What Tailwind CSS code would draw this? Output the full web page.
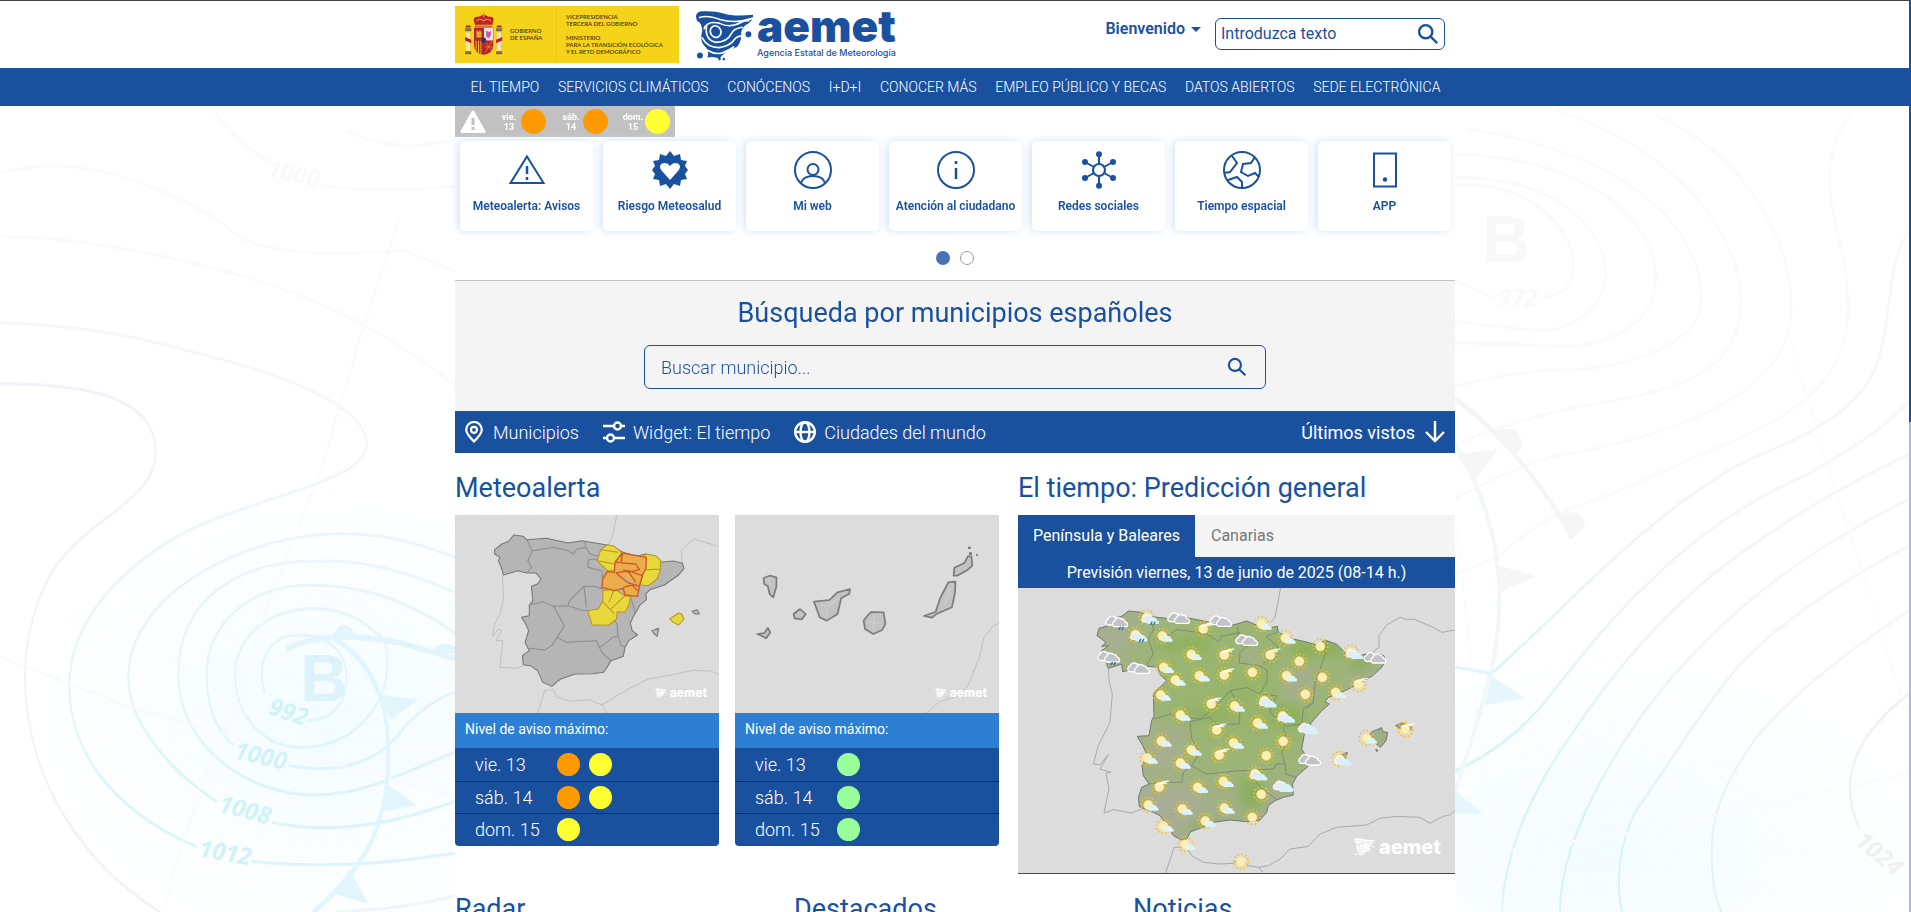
<!DOCTYPE html>
<html lang="es" class="[scrollbar-width:none]">

<head>
    <meta charset="UTF-8">
    <meta name="viewport" content="width=device-width, initial-scale=1.0">
    <title>Agencia Estatal de Meteorología - AEMET</title>
    <script src="https://cdn.jsdelivr.net/npm/@tailwindcss/browser@4"></script>
</head>

<body class="bg-white text-[#1a519f] font-[Roboto,sans-serif] pr-px">

    <!-- Shared symbols -->
    <svg class="absolute w-0 h-0" aria-hidden="true">
        <defs>
            <mask id="contours" maskUnits="userSpaceOnUse" x="755" y="20" width="200" height="170">
                <rect x="755" y="20" width="200" height="170" fill="#fff" />
                <g fill="none" stroke="#000" stroke-width="5" stroke-linecap="round">
                    <path d="M776 50Q800 42 838 56Q885 70 940 52" />
                    <path d="M790 84Q800 58 838 68Q868 84 905 64Q918 58 926 60" />
                    <ellipse cx="825" cy="93" rx="16" ry="18" transform="rotate(-25 825 93)" />
                    <path d="M797 78Q792 118 825 126Q860 126 874 98Q880 84 906 80" />
                    <path d="M784 112Q800 142 836 142Q868 136 880 120Q888 108 904 106" />
                    <path d="M800 150Q822 164 846 158Q866 150 880 140" />
                </g>
            </mask>
            <symbol id="aemetMark" viewBox="762 28 180 154">
                <g fill="currentColor">
                    <path mask="url(#contours)"
                        d="M765 48Q764 30 790 31Q825 30 850 38Q880 48 939 42Q941 56 926 68Q908 76 903 94Q906 120 890 140Q856 150 836 176Q822 168 800 172Q808 150 788 134Q776 118 784 92Q784 66 768 60Z" />
                    <circle cx="777" cy="166" r="9" />
                    <circle cx="925" cy="101" r="9" />
                    <circle cx="837" cy="177" r="4" />
                    <circle cx="850" cy="177" r="4" />
                </g>
            </symbol>
            <symbol id="lupa" viewBox="0 0 24 24">
                <path fill="none" stroke="currentColor" stroke-width="2.6" d="M14.6 14.6L22 22M9.5 2.3a7.2 7.2 0 1 0 0 14.4a7.2 7.2 0 0 0 0-14.4z" />
            </symbol>

            <!-- Weather icons, centred on the sun -->
            <g id="sol">
                <circle r="22" fill="none" stroke="#f2c21a" stroke-width="5" stroke-dasharray="4.5 7.02" />
                <circle r="14" fill="#fdeeb4" stroke="#f9de62" stroke-width="2" />
            </g>
            <path id="nube" d="M-20 13a9 9 0 0 1 1-17a12 12 0 0 1 20-6a10 10 0 0 1 11 9a8 8 0 0 1 5 14z" />
            <g id="pocoNuboso">
                <use href="#sol" />
                <use href="#nube" fill="#dff3fb" transform="translate(17 8) scale(.72)" />
            </g>
            <g id="velos">
                <use href="#sol" />
                <path fill="#fff" fill-opacity=".85" d="M-18-7Q-4-11 4-15Q16-20 32-19Q30-15 18-14Q24-13 24-10Q4-9-18-7z" />
            </g>
            <g id="cubierto">
                <g fill="#c2c2c9" stroke="#fff" stroke-width="4" stroke-linejoin="round">
                    <use href="#nube" transform="translate(-9 -2)" />
                    <use href="#nube" transform="translate(11 3)" />
                </g>
            </g>
            <g id="nubes">
                <use href="#nube" fill="#e9e9ee" stroke="#fff" stroke-width="3" transform="translate(-5 -2)" />
                <use href="#nube" fill="#d8f0fa" transform="translate(11 5)" />
            </g>
            <g id="nuboso">
                <use href="#sol" />
                <use href="#nubes" transform="translate(11 5) scale(.85)" />
            </g>
            <g id="gotas" stroke="#2d6ca8" stroke-width="4" stroke-linecap="round">
                <path d="M3 15l-4 7M12 15l-4 7" />
            </g>
            <g id="lluvia">
                <use href="#cubierto" />
                <use href="#gotas" transform="translate(6 2)" />
            </g>
            <g id="solLluvia">
                <use href="#nuboso" />
                <use href="#gotas" transform="translate(13 -1)" />
            </g>
        </defs>
    </svg>

    <!-- Isobar background -->
    <svg class="fixed left-0 top-0 -z-10" width="1911" height="912" fill="none" aria-hidden="true">
        <defs>
            <radialGradient id="glow">
                <stop offset="0" stop-color="#f3fcff" />
                <stop offset="1" stop-color="#f3fcff" stop-opacity="0" />
            </radialGradient>
            <linearGradient id="isoL" x1="0" y1="200" x2="0" y2="1300" gradientUnits="userSpaceOnUse">
                <stop offset="0" stop-color="#f9f9fa" />
                <stop offset=".4" stop-color="#f4f6fc" />
                <stop offset="1" stop-color="#def4fb" />
            </linearGradient>
            <linearGradient id="isoR" x1="900" y1="700" x2="400" y2="1400" gradientUnits="userSpaceOnUse">
                <stop offset="0" stop-color="#f6f6f6" />
                <stop offset=".5" stop-color="#eff4f9" />
                <stop offset="1" stop-color="#d9f3fa" />
            </linearGradient>
        </defs>
        <ellipse cx="330" cy="720" rx="300" ry="230" fill="url(#glow)" />
        <ellipse cx="1600" cy="850" rx="330" ry="200" fill="url(#glow)" />
        <g transform="translate(0 100) scale(.3333 .5179)" stroke="url(#isoL)" stroke-width="6">
            <path stroke="#fafafa" d="M0 140Q200 110 400 155T700 255T1210 290L1400 340M0 263Q300 265 700 335T1400 570M640 20Q720 90 810 120M960 165Q1150 180 1400 165M1040 60Q1200 110 1400 70" />
            <path d="M0 430C300 435 480 470 600 490C850 530 1100 590 1100 665C1100 745 700 770 500 855C330 925 205 1020 208 1135C212 1290 400 1390 590 1442M755 1470Q1050 1490 1400 1450" />
            <path stroke="#f1f3fa" d="M0 548C250 548 467 570 467 680C467 790 200 810 120 960C90 1010 75 1060 75 1110C75 1320 260 1480 480 1568" />
            <path d="M1400 892C1200 840 1100 835 980 838C700 850 385 960 385 1115C385 1200 500 1290 650 1355M815 1395Q1080 1430 1400 1345" />
            <path d="M1400 960C1150 890 1050 890 950 890C720 890 535 960 535 1110C535 1250 750 1342 940 1342C1100 1342 1200 1300 1400 1250" />
            <path d="M1400 1045C1200 950 1050 937 930 937C750 937 620 1010 620 1110C620 1170 650 1220 700 1245M865 1285Q1080 1310 1190 1230Q1270 1160 1400 1135" />
            <path d="M945 982C800 982 705 1040 705 1110C705 1190 790 1250 905 1250C1060 1250 1162 1170 1162 1090C1162 1050 1155 1035 1130 1030C1080 1000 1020 982 945 982zM795 1145C770 1100 790 1033 900 1033C990 1033 1040 1070 1040 1115C1040 1170 990 1198 920 1198" />
            <path stroke="#f8f9fc" stroke-width="4" d="M1200 230L1080 460L960 720L800 980L700 1180L600 1330L490 1560M0 1075L380 1170L700 1230L1400 1350" />
            <g stroke="#e2f4fc" stroke-width="11">
                <path d="M860 1060Q980 1020 1200 1048L1400 1085M1000 1040C1120 1080 1165 1170 1165 1260C1165 1400 1100 1480 940 1568" />
                <path fill="#e2f4fc" stroke="none" d="M995 1040Q1030 985 1075 1042zM1300 1062Q1340 1032 1400 1075zM1140 1148L1255 1158L1170 1196zM1160 1320L1250 1362L1140 1374zM1050 1485L1105 1552L1000 1532z" />
            </g>
            <path stroke="#f1f5fb" d="M1010 1568Q1250 1560 1400 1530" />
        </g>
        <g transform="translate(1450 100) scale(.3333 .5179)" stroke-width="6">
            <g stroke="#fafafa">
                <path d="M0 165C200 150 370 230 370 325C370 365 330 375 275 383M0 345L130 382M0 150C300 145 467 240 467 335C467 400 370 445 270 445C180 442 80 432 0 425M0 105C400 105 618 230 618 345C618 430 480 476 330 476C200 470 100 470 0 470" />
                <path d="M50 55C500 100 755 230 755 390C755 470 520 521 350 521C200 522 100 540 0 555M320 20C700 100 873 270 873 385C873 510 740 560 400 590C250 610 100 640 0 670M620 30C900 110 1025 280 1025 400C1025 520 850 630 300 690Q150 720 0 775" />
                <path d="M1200 30C1140 80 1130 140 1145 200C1170 290 1195 330 1195 400C1195 560 1000 620 750 685C600 730 450 770 380 785Q240 820 150 880L0 920" />
            </g>
            <g stroke="url(#isoR)">
                <path d="M1380 250C1310 310 1330 400 1290 490C1240 620 1000 660 850 710C560 820 350 980 120 1110" />
                <path d="M1380 580Q1300 640 1080 720Q800 800 600 930Q480 1000 300 1150Q180 1250 0 1300" />
                <path d="M1380 683Q1100 770 930 850Q620 980 370 1220Q170 1400 155 1568" />
                <path d="M1380 770Q1000 890 760 1050Q540 1190 410 1370Q330 1480 330 1568" />
                <path d="M1380 860Q1050 970 870 1090C740 1190 650 1290 560 1370C500 1440 500 1520 515 1568" />
                <path d="M1380 985Q1080 1110 920 1230C820 1320 785 1380 785 1450Q785 1530 815 1568" />
            </g>
            <path stroke="#f1f1f1" d="M1380 1145C1250 1210 1200 1270 1200 1330Q1200 1370 1230 1408" />
            <path stroke="#f9fbfc" stroke-width="4" d="M1020 460L1120 680L1200 840L1380 1200M20 830L80 1180L155 1568M0 1465L600 1410L1380 1300" />
            <path stroke="#f5f5f5" stroke-width="10" d="M0 570Q200 660 370 845" />
            <path stroke="#f2f7fa" stroke-width="12" d="M0 650Q200 850 130 1080Q90 1200 0 1360" />
            <path fill="#f6f6f6" d="M135 640Q220 620 215 675L190 685zM325 800Q400 785 405 825L360 850zM20 685L145 675L70 735zM150 900L260 920L150 950z" />
            <path fill="#e6f6fd" d="M125 1112L225 1155L105 1168zM0 1325L100 1378L0 1378z" />
            <path stroke="#e3f4fc" d="M0 1093L130 1108" />
        </g>
        <g class="font-['Open_Sans',sans-serif] font-bold italic" text-anchor="middle">
            <g fill="#d2f2f9" font-size="24">
                <text transform="translate(286 720) rotate(18)">992</text>
                <text transform="translate(259 764) rotate(13)">1000</text>
                <text transform="translate(243 818) rotate(15)">1008</text>
                <text transform="translate(224 861) rotate(10)">1012</text>
            </g>
            <g fill="#f9f9f9" font-size="24">
                <text transform="translate(292 182) rotate(12)">1000</text>
                <text x="1518" y="306">972</text>
                <text fill="#f0f0f0" transform="translate(1874 860) rotate(40)">1024</text>
            </g>
        </g>
        <g class="font-['Liberation_Sans',sans-serif] font-bold" text-anchor="middle" font-size="66">
            <text x="324" y="701" fill="#dcf3fc">B</text>
            <text x="1506" y="262" fill="#f8f8f8">B</text>
        </g>
    </svg>

    <!-- Header -->
    <header class="bg-white border-t border-[#444] h-17">
        <div class="max-w-[1000px] mx-auto flex items-start">
            <a href="#" class="mt-[5px] w-56 h-[57px] bg-[#f6d31b] flex text-[#4a3a10] font-[Lato,sans-serif] font-semibold text-[6px] leading-[7px]">
                <svg class="ml-2 mt-[5px]" width="42" height="46" viewBox="40 36 122 128" preserveAspectRatio="none" aria-label="Escudo de España">
                    <path d="M73 68Q66 50 86 52Q100 42 115 52Q134 50 127 68L124 80H76z" fill="#c0202c" />
                    <path d="M78 64Q90 54 100 64Q110 54 122 64M100 40v14M95 45h10" fill="none" stroke="#d8a21c" stroke-width="3" />
                    <path d="M76 74h48v5H76z" fill="#d8a21c" />
                    <path d="M50 96h10v50H50zM140 96h10v50h-10z" fill="#e8e4e0" />
                    <path d="M46 84h18v8H46zM136 84h18v8h-18zM46 148h18v8H46zM136 148h18v8h-18z" fill="#7b6f4a" />
                    <path d="M46 108l18 8v10l-18-8zM154 108l-18 8v10l18-8zM48 76h14v6H48zM138 76h14v6h-14z" fill="#c0202c" />
                    <path d="M72 82h56v48q0 24-28 28q-28-4-28-28z" fill="#b8242e" />
                    <path d="M101 83h26v35h-26z" fill="#efdfe6" />
                    <path d="M107 90l8 5l6-5v12l-5 10l-8-4z" fill="#b8609a" />
                    <path d="M79 96v-6h4v4h4v-4h4v4h3v16H79z" fill="#e0a92a" />
                    <path d="M78 119v30M85 119v34M92 119v37" stroke="#e6b422" stroke-width="3" />
                    <path d="M103 120l22 28M125 120l-21 32M104 136h22" stroke="#d8962a" stroke-width="2" />
                    <ellipse cx="100" cy="118" rx="7" ry="8" fill="#203a80" stroke="#c0202c" stroke-width="2" />
                </svg>
                <span class="ml-[5px] mt-[21px] w-[46px]">GOBIERNO<br>DE ESPAÑA</span>
                <span class="border-l border-[#e9c617] pl-[9px] pt-[7px] whitespace-nowrap">VICEPRESIDENCIA<br>TERCERA DEL GOBIERNO<br><br>MINISTERIO<br>PARA LA TRANSICIÓN ECOLÓGICA<br>Y EL RETO DEMOGRÁFICO</span>
            </a>
            <a href="#" class="flex ml-4 mt-[9px]" aria-label="aemet">
                <svg width="59" height="51">
                    <use href="#aemetMark" />
                </svg>
                <span class="ml-[3px] font-[Inter,sans-serif]">
                    <span class="block font-black text-[44px] leading-8">aemet</span>
                    <span class="block font-medium text-[9px] leading-3 mt-[5px]">Agencia Estatal de Meteorología</span>
                </span>
            </a>
            <div class="ml-auto mr-[10px] flex items-start">
                <button type="button" class="mt-[18px] mr-[14px] flex items-center gap-[6px] text-base leading-5 font-semibold">
                    Bienvenido
                    <span class="border-x-[5px] border-x-transparent border-t-[5px] border-t-[#1a519f]"></span>
                </button>
                <form class="mt-[17px] w-[230px] h-8 px-[5px] flex items-center border border-[#1a519f] rounded-md bg-white">
                    <input type="text" aria-label="Introduzca texto" placeholder="Introduzca texto"
                        class="flex-1 min-w-0 text-base outline-none placeholder:text-[#1a519f]">
                    <button type="submit" aria-label="Buscar"><svg width="22" height="22">
                            <use href="#lupa" />
                        </svg></button>
                </form>
            </div>
        </div>
    </header>

    <!-- Main navigation -->
    <nav class="bg-[#1a519f] -mr-px">
        <ul class="max-w-[1000px] mx-auto px-[15px] h-[38px] flex items-center justify-between text-white text-[14px] font-light whitespace-nowrap">
            <li><a href="#">EL TIEMPO</a></li>
            <li><a href="#">SERVICIOS CLIMÁTICOS</a></li>
            <li><a href="#">CONÓCENOS</a></li>
            <li><a href="#">I+D+I</a></li>
            <li><a href="#">CONOCER MÁS</a></li>
            <li><a href="#">EMPLEO PÚBLICO Y BECAS</a></li>
            <li><a href="#">DATOS ABIERTOS</a></li>
            <li><a href="#">SEDE ELECTRÓNICA</a></li>
        </ul>
    </nav>

    <main class="max-w-[1000px] mx-auto bg-white pb-8">

        <!-- Warning strip -->
        <a href="#" class="w-55 h-[31px] pl-[5px] bg-[#c1c1c1] flex items-center text-white font-bold text-[9px] leading-[10px] text-center">
            <svg width="26" height="24" viewBox="0 0 26 24" class="mr-3" aria-hidden="true">
                <path d="M13 2L24 21.500H2z" fill="#fff" stroke="#fff" stroke-width="3" stroke-linejoin="round" />
                <path d="M13 8v7M13 17v3" stroke="#c1c1c1" stroke-width="3" />
            </svg>
            <span class="w-[22px]">vie.<br>13</span><i class="size-[25px] rounded-full bg-[#ff9900] ml-px mr-[14px]"></i>
            <span class="w-[22px]">sáb.<br>14</span><i class="size-[25px] rounded-full bg-[#ff9900] ml-px mr-[14px]"></i>
            <span class="w-[22px]">dom.<br>15</span><i class="size-[25px] rounded-full bg-[#ffff33] ml-px"></i>
        </a>

        <!-- Quick links -->
        <div class="grid grid-cols-7 gap-[10px] pl-[5px] pr-1 pt-1 text-[12px] font-semibold text-center whitespace-nowrap">
            <a href="#" class="h-[90px] pt-[10px] flex flex-col items-center bg-white rounded-[5px] shadow-[-2px_0_8px_#cfe2f6]">
                <svg width="38" height="38" viewBox="0 0 38 38" fill="none" stroke="currentColor" stroke-width="2">
                    <path d="M19 5.500L35.500 32H2.500z" /><path d="M19 15v8M19 26v3" stroke-width="2.500" />
                </svg>
                <span class="mt-2">Meteoalerta: Avisos</span>
            </a>
            <a href="#" class="h-[90px] pt-[10px] flex flex-col items-center bg-white rounded-[5px] shadow-[-2px_0_8px_#cfe2f6]">
                <svg width="38" height="38" viewBox="0 0 38 38">
                    <path fill="currentColor" d="M19 0l4 5l6-2l1 6l6 1l-2 5l3 4l-3 4l2 5l-6 1l-1 6l-6-2l-4 5l-4-5l-6 2l-1-6l-6-1l2-5l-3-4l3-4l-2-5l6-1l1-6l6 2z" />
                    <path fill="#fff" d="M19 29L11 20Q7 15 11 12.500Q16 10.500 19 15Q22 10.500 27 12.500Q31 15 27 20z" />
                </svg>
                <span class="mt-2">Riesgo Meteosalud</span>
            </a>
            <a href="#" class="h-[90px] pt-[10px] flex flex-col items-center bg-white rounded-[5px] shadow-[-2px_0_8px_#cfe2f6]">
                <svg width="38" height="38" viewBox="0 0 38 38" fill="none" stroke="currentColor" stroke-width="2">
                    <circle cx="19" cy="19" r="18" /><circle cx="19" cy="18.500" r="5.500" /><path d="M7 32Q9 25 19 25T31 32" />
                </svg>
                <span class="mt-2">Mi web</span>
            </a>
            <a href="#" class="h-[90px] pt-[10px] flex flex-col items-center bg-white rounded-[5px] shadow-[-2px_0_8px_#cfe2f6]">
                <svg width="38" height="38" viewBox="0 0 38 38" fill="none" stroke="currentColor" stroke-width="2">
                    <circle cx="19" cy="19" r="18" /><path d="M19 17v11M19 10v3" stroke-width="2.500" />
                </svg>
                <span class="mt-2">Atención al ciudadano</span>
            </a>
            <a href="#" class="h-[90px] pt-[10px] flex flex-col items-center bg-white rounded-[5px] shadow-[-2px_0_8px_#cfe2f6]">
                <svg width="38" height="38" viewBox="0 0 38 38" fill="currentColor">
                    <circle cx="19" cy="19" r="6" fill="none" stroke="currentColor" stroke-width="2.200" />
                    <path stroke="currentColor" stroke-width="2" d="M19 3v10M19 25v10M5 11l9 5M33 11l-9 5M5 27l9-5M33 27l-9-5" />
                    <circle cx="19" cy="3.200" r="3" /><circle cx="19" cy="34.800" r="3" /><circle cx="5" cy="11" r="3" /><circle cx="33" cy="11" r="3" /><circle cx="5" cy="27" r="3" /><circle cx="33" cy="27" r="3" />
                </svg>
                <span class="mt-2">Redes sociales</span>
            </a>
            <a href="#" class="h-[90px] pt-[10px] flex flex-col items-center bg-white rounded-[5px] shadow-[-2px_0_8px_#cfe2f6]">
                <svg width="38" height="38" viewBox="0 0 38 38" fill="none" stroke="currentColor" stroke-width="2">
                    <circle cx="19" cy="19" r="18" />
                    <path d="M9 5l5 7l-7 9l-6 1M32 6l-4 6l-8 1l-2 8l7 4l7-3l4 4M5 29l9-3l5 5v6" />
                </svg>
                <span class="mt-2">Tiempo espacial</span>
            </a>
            <a href="#" class="h-[90px] pt-[10px] flex flex-col items-center bg-white rounded-[5px] shadow-[-2px_0_8px_#cfe2f6]">
                <svg width="38" height="38" viewBox="0 0 38 38" fill="none" stroke="currentColor" stroke-width="2">
                    <path d="M8 2.500h22v33H8z" /><circle cx="19" cy="28.500" r="2.200" fill="currentColor" stroke="none" />
                </svg>
                <span class="mt-2">APP</span>
            </a>
        </div>
        <div class="flex justify-center gap-[10px] mt-5 mb-[15px]">
            <button type="button" aria-label="Página 1" class="size-[14px] rounded-full bg-[#4774b8]"></button>
            <button type="button" aria-label="Página 2" class="size-[14px] rounded-full border border-[#999]"></button>
        </div>

        <!-- Town search -->
        <section class="h-[131px] border-t border-[#bfc3c7] bg-[#f4f4f4] pt-4">
            <h2 class="text-[27px] leading-8 text-center">Búsqueda por municipios españoles</h2>
            <form class="mt-4 mx-auto w-[622px] h-11 pl-4 pr-[18px] flex items-center border border-[#1a519f] rounded-md">
                <input type="text" aria-label="Buscar municipio" placeholder="Buscar municipio..."
                    class="flex-1 text-[18px] font-light outline-none placeholder:text-[#1a519f]">
                <button type="submit" aria-label="Buscar"><svg width="20" height="20">
                        <use href="#lupa" />
                    </svg></button>
            </form>
        </section>
        <div class="h-[42px] px-[10px] bg-[#1a519f] text-white text-[18px] font-light flex items-center">
            <a href="#" class="flex items-center gap-[10px]">
                <svg width="18" height="22" viewBox="0 0 18 22" fill="none" stroke="currentColor" stroke-width="2.200">
                    <path d="M9 20.500Q1.200 13 1.200 8.800a7.800 7.800 0 0 1 15.600 0Q16.800 13 9 20.500z" /><circle cx="9" cy="8.800" r="3" />
                </svg>Municipios</a>
            <a href="#" class="flex items-center gap-2 ml-6">
                <svg width="22" height="22" viewBox="0 0 22 22" fill="none" stroke="currentColor" stroke-width="2.400">
                    <path d="M0 5h11M18 5h4M0 17h4M11 17h11" /><circle cx="14.500" cy="5" r="3.500" /><circle cx="7.500" cy="17" r="3.500" />
                </svg>Widget: El tiempo</a>
            <a href="#" class="flex items-center gap-2 ml-6">
                <svg width="22" height="22" viewBox="0 0 22 22" fill="none" stroke="currentColor" stroke-width="2.400">
                    <circle cx="11" cy="11" r="9.800" /><ellipse cx="11" cy="11" rx="4.500" ry="9.800" /><path d="M1 11h20" />
                </svg>Ciudades del mundo</a>
            <button type="button" class="ml-auto flex items-center gap-[10px] font-normal">Últimos vistos
                <svg width="20" height="22" viewBox="0 0 20 22" fill="none" stroke="currentColor" stroke-width="2.400">
                    <path d="M10 0v20M1 11l9 9l9-9" />
                </svg></button>
        </div>

        <div class="grid grid-cols-[544fr_437fr] gap-x-[19px] pt-[17px]">
            <!-- Warnings -->
            <section>
                <h2 class="text-[27px] leading-9">Meteoalerta</h2>
                <div class="mt-[9px] grid grid-cols-2 gap-4">
                    <div>
                        <a href="#" class="relative block">
                            <svg class="block w-full h-[198px] bg-[#dcdcdc]" viewBox="14 48 739 594" preserveAspectRatio="none" stroke-linejoin="round" aria-label="Mapa de avisos de la península">
                                <g fill="none" stroke="#b2b2b2" stroke-width="2">
                                    <path d="M147 228L150 300L140 345L124 378L120 412L135 390L145 395L128 425L148 425L140 505L185 508L205 500" />
                                    <path d="M467 48L455 110L443 138M650 190L648 155L682 120L720 132L753 143M246 642L265 575L288 572L300 595L335 607L390 602L425 618L440 642M425 618L470 588L500 570L555 540L620 528L680 514L730 516L753 527" />
                                </g>
                                <path fill="#b5b5b5" stroke="#777" stroke-width="3" d="M125 152L145 135L165 127L178 108L205 112L215 122L270 118L330 132L370 125L440 138L460 145L485 160L520 172L548 165L575 172L590 190L625 186L650 192L655 208L640 228L600 258L560 272L548 285L550 302L532 318L512 355L505 372L510 395L525 408L500 425L490 445L485 472L465 480L450 485L440 505L430 520L400 524L350 525L310 540L300 548L285 562L260 550L245 515L225 500L205 497L203 470L222 455L210 430L220 395L212 375L200 355L222 350L222 318L232 305L228 262L245 255L255 240L240 222L215 222L190 215L150 228L142 200L135 185L140 175L125 165z" />
                                <path fill="#bbb" stroke="#777" stroke-width="3" d="M565 395L584 388L580 412L572 405zM678 337L692 332L698 345L685 345z" />
                                <path fill="none" stroke="#8c8c8c" stroke-width="3" d="M215 122L230 155L218 185L228 205L215 222M230 155L290 145L330 155L345 165L355 150L380 145L378 128M380 145L392 165L415 172M415 180L388 182L385 205L425 215M425 215L428 270L405 262L375 262L335 305L330 320M222 318L260 308L290 322L330 320L375 335L385 332M290 322L320 380L300 415L325 430L410 425L418 445L430 438L455 415L470 412L468 375L460 365M300 415L285 440L265 453L222 448M410 425L425 460L450 485M375 262L382 325M505 292L520 345M470 412L480 440L490 445" />
                                <path fill="#e8d83c" stroke="#b5952a" stroke-width="3" d="M440 137L460 142L482 162L465 185L460 215L440 215L412 185L422 152zM545 165L575 170L590 185L588 215L580 240L555 260L532 258L540 225L548 210zM428 275L460 270L490 290L505 292L502 315L490 340L468 338L466 360L445 378L398 378L385 335L415 330L428 305zM615 360L640 342L648 345L655 360L640 378L625 370zM422 152L470 160M415 185L460 195M425 305L460 345M460 270L445 310M490 290L450 330M588 210L548 212" />
                                <path fill="#eaad4c" stroke="#d05a24" stroke-width="4" d="M482 162L550 175L548 210L540 225L530 262L525 292L490 288L485 268L460 275L425 265L428 238L440 218L460 220L462 190zM482 162L480 190L462 190M480 192L520 195L530 212L500 220L485 212M465 222L500 215L538 230M465 222L485 240L500 252L532 262M500 218L520 250M485 265L510 258L525 275" />
                            </svg>
                            <span class="absolute right-3 bottom-3 flex items-center gap-[3px] text-white font-[Inter,sans-serif] font-extrabold text-[12px] leading-4">
                                <svg width="12" height="10"><use href="#aemetMark" /></svg>aemet</span>
                        </a>
                        <table class="w-full bg-[#1a519f] text-white text-left text-[18px] rounded-b overflow-hidden">
                            <caption class="h-[35px] px-[10px] bg-[#2d7fd4] text-left text-[14px] leading-8">Nivel de aviso máximo:</caption>
                            <tr class="h-[33px] border-b border-[#0e2f60]">
                                <th class="w-[102px] pl-5 font-light">vie. 13</th>
                                <td><span class="flex gap-[9px]"><i class="size-[23px] rounded-full bg-[#ff9900]"></i><i class="size-[23px] rounded-full bg-[#ffff33]"></i></span></td>
                            </tr>
                            <tr class="h-8 border-b border-[#0e2f60]">
                                <th class="pl-5 font-light">sáb. 14</th>
                                <td><span class="flex gap-[9px]"><i class="size-[23px] rounded-full bg-[#ff9900]"></i><i class="size-[23px] rounded-full bg-[#ffff33]"></i></span></td>
                            </tr>
                            <tr class="h-[33px]">
                                <th class="pl-5 font-light">dom. 15</th>
                                <td><span class="flex"><i class="size-[23px] rounded-full bg-[#ffff33]"></i></span></td>
                            </tr>
                        </table>
                    </div>
                    <div>
                        <a href="#" class="relative block">
                            <svg class="block w-full h-[198px] bg-[#dcdcdc]" viewBox="798 48 739 594" preserveAspectRatio="none" stroke-linejoin="round" aria-label="Mapa de avisos de Canarias">
                                <path fill="none" stroke="#b2b2b2" stroke-width="2" d="M1537 373L1522 380L1495 415L1482 475L1450 560L1425 590L1370 608L1335 642" />
                                <g fill="#c3c3c3" stroke="#7d7d7d" stroke-width="5">
                                    <path d="M878 237L895 230L914 235L914 262L905 295L895 285L890 262L880 255zM962 345L980 330L996 345L985 361L965 358zM860 405L880 402L890 387L897 400L885 418L875 412z" />
                                    <path d="M1019 308L1062 303L1085 280L1120 270L1118 284L1095 298L1085 345L1055 365L1035 355L1024 322zM1172 346L1180 339L1214 340L1219 375L1210 393L1185 405L1162 390L1158 365z" />
                                    <path d="M1395 250L1415 248L1414 280L1405 325L1362 345L1350 356L1327 351L1360 338L1372 298zM1410 230L1412 206L1440 192L1450 172L1460 172L1462 200L1450 212L1420 230z" />
                                </g>
                                <path fill="none" stroke="#cfcfcf" stroke-width="3" d="M1035 320L1060 320L1090 295M1055 330L1055 350M1172 370L1205 372M1188 350L1186 390M1400 265L1385 320M890 240L900 260" />
                                <path fill="#777" d="M1450 143h8v7h-8zM1453 160h8v8h-8zM1473 165h5v5h-5z" />
                            </svg>
                            <span class="absolute right-3 bottom-3 flex items-center gap-[3px] text-white font-[Inter,sans-serif] font-extrabold text-[12px] leading-4">
                                <svg width="12" height="10"><use href="#aemetMark" /></svg>aemet</span>
                        </a>
                        <table class="w-full bg-[#1a519f] text-white text-left text-[18px] rounded-b overflow-hidden">
                            <caption class="h-[35px] px-[10px] bg-[#2d7fd4] text-left text-[14px] leading-8">Nivel de aviso máximo:</caption>
                            <tr class="h-[33px] border-b border-[#0e2f60]">
                                <th class="w-[102px] pl-5 font-light">vie. 13</th>
                                <td><span class="flex"><i class="size-[23px] rounded-full bg-[#99ff99]"></i></span></td>
                            </tr>
                            <tr class="h-8 border-b border-[#0e2f60]">
                                <th class="pl-5 font-light">sáb. 14</th>
                                <td><span class="flex"><i class="size-[23px] rounded-full bg-[#99ff99]"></i></span></td>
                            </tr>
                            <tr class="h-[33px]">
                                <th class="pl-5 font-light">dom. 15</th>
                                <td><span class="flex"><i class="size-[23px] rounded-full bg-[#99ff99]"></i></span></td>
                            </tr>
                        </table>
                    </div>
                </div>
            </section>

            <!-- General forecast -->
            <section>
                <h2 class="text-[27px] leading-9">El tiempo: Predicción general</h2>
                <div class="mt-[9px] h-[42px] flex bg-[#f4f4f4] text-base">
                    <button type="button" class="w-[177px] bg-[#1a519f] text-white whitespace-nowrap">Península y Baleares</button>
                    <button type="button" class="px-4 text-[#777]">Canarias</button>
                </div>
                <p class="bg-[#1a519f] text-white text-base leading-[31px] text-center">Previsión viernes, 13 de junio de 2025 (08-14 h.)</p>
                <a href="#" class="relative block border-b border-[#1a519f]">
                    <svg class="block w-full h-[285px] bg-[#dcdcdc]" viewBox="54 147 1311 855" preserveAspectRatio="none" stroke-linejoin="round" aria-label="Mapa de predicción">
                        <defs>
                            <radialGradient id="land" cx=".5" cy=".35" r=".6">
                                <stop offset="0" stop-color="#96b568" />
                                <stop offset=".6" stop-color="#9db479" />
                                <stop offset="1" stop-color="#a6ae92" />
                            </radialGradient>
                            <filter id="soft">
                                <feGaussianBlur stdDeviation="18" />
                            </filter>
                            <clipPath id="coast">
                                <path id="spain" d="M291 290L297 268L320 262L330 240L365 232L385 216L425 220L445 232L500 238L560 236L620 248L665 255L700 258L740 246L770 258L800 268L832 262L835 280L880 300L915 308L950 318L975 303L1010 316L1040 345L1080 350L1110 342L1152 350L1154 370L1145 385L1118 410L1070 438L1020 462L985 475L975 488L988 495L965 515L935 550L912 590L905 630L920 655L940 668L915 690L890 712L878 735L880 768L850 775L825 785L805 800L800 820L780 843L740 848L690 843L640 850L600 868L572 878L560 900L545 903L520 890L505 862L480 830L460 820L418 803L415 775L425 745L447 735L430 710L426 680L442 650L428 620L412 592L447 590L455 545L462 530L460 465L500 425L478 405L475 385L430 380L395 392L368 398L365 375L325 388L318 370L312 350L305 335L325 320L305 322L318 310z" />
                            </clipPath>
                        </defs>
                        <g fill="none" stroke="#a9a9a9" stroke-width="3">
                            <path d="M325 388L328 430L337 465L330 550L295 620L280 675L300 677L325 647L300 690L333 700L318 702L327 750L312 822L340 812L395 822L430 808" />
                            <path d="M842 147L825 235L812 250M1115 342L1137 325L1137 290L1160 258L1200 235L1220 242L1240 240L1300 265L1325 280L1365 273M497 1002L522 925L560 925L575 950L610 970L660 975L700 973L722 958L745 980L775 985L790 1000M775 985L805 980L840 960L870 930L925 922L960 885L1010 865L1100 858L1140 838L1190 832L1260 835L1290 853L1330 832L1350 828L1365 815" />
                        </g>
                        <use href="#spain" fill="url(#land)" />
                        <g clip-path="url(#coast)">
                            <g filter="url(#soft)">
                                <path fill="#7fae45" d="M470 300h160v30H470zM880 310h150v40H880zM1050 350h60v50h-60zM720 720h70v90h-70zM560 850h200v25H560zM540 520h150v20H540zM820 500h80v60h-80z" opacity=".6" />
                                <path fill="#acab9d" d="M300 270h90v60h-90zM840 380h110v110H840zM440 560h120v130H440zM440 740h160v90H440zM800 760h60v60h-60zM720 330h70v50h-70zM1040 400h70v40h-70z" opacity=".6" />
                            </g>
                        </g>
                        <use href="#spain" fill="none" stroke="#707870" stroke-width="3" />
                        <path fill="#a0ae84" stroke="#707870" stroke-width="3" d="M1100 602L1112 580L1145 566L1148 578L1163 580L1158 605L1142 625L1125 612zM1187 560L1205 552L1235 562L1232 574L1200 568zM1018 650L1042 640L1035 665L1020 668zM1127 632l6 0l-2 6z" />
                        <path fill="none" stroke="#7d8c72" stroke-width="3" d="M445 232L462 270L445 300L460 345L440 378M460 302L500 292L530 272L580 278L630 290L655 308L665 292L720 280M712 262L715 290L745 318L720 340L718 372L780 380L802 395L800 430L780 465M830 280L798 292L832 322L835 350L790 372M980 308L975 350L945 430L940 490L920 510M462 540L510 525L560 535L600 540L650 500L690 455L740 446L780 465L830 470L808 520L860 562L905 555L910 510L940 490M690 455L720 500L718 555L650 556L630 535L570 548L575 600L600 640L575 680L620 705L720 695L820 690L830 675L855 675L845 640L862 610L850 562M447 735L490 730L545 730L550 700L575 680M752 700L780 745L830 782M855 675L858 705L890 715" />

                        <use href="#lluvia" x="352" y="247" /><use href="#lluvia" x="328" y="353" />
                        <use href="#solLluvia" x="440" y="235" /><use href="#solLluvia" x="406" y="287" />
                        <use href="#cubierto" x="538" y="237" /><use href="#cubierto" x="664" y="246" /><use href="#cubierto" x="742" y="303" />
                        <use href="#cubierto" x="418" y="387" /><use href="#cubierto" x="1127" y="356" /><use href="#cubierto" x="931" y="662" />
                        <use href="#pocoNuboso" x="487" y="291" /><use href="#pocoNuboso" x="784" y="255" /><use href="#pocoNuboso" x="856" y="297" />
                        <use href="#pocoNuboso" x="574" y="346" /><use href="#pocoNuboso" x="491" y="385" /><use href="#pocoNuboso" x="526" y="423" />
                        <use href="#pocoNuboso" x="598" y="410" /><use href="#pocoNuboso" x="482" y="468" /><use href="#pocoNuboso" x="860" y="410" />
                        <use href="#pocoNuboso" x="1007" y="460" /><use href="#pocoNuboso" x="704" y="501" /><use href="#pocoNuboso" x="541" y="528" />
                        <use href="#pocoNuboso" x="773" y="552" /><use href="#pocoNuboso" x="484" y="606" /><use href="#pocoNuboso" x="574" y="633" />
                        <use href="#pocoNuboso" x="442" y="657" /><use href="#pocoNuboso" x="541" y="672" /><use href="#pocoNuboso" x="701" y="612" />
                        <use href="#pocoNuboso" x="670" y="727" /><use href="#pocoNuboso" x="593" y="745" /><use href="#pocoNuboso" x="445" y="798" />
                        <use href="#pocoNuboso" x="547" y="810" /><use href="#pocoNuboso" x="673" y="807" /><use href="#pocoNuboso" x="490" y="861" />
                        <use href="#pocoNuboso" x="616" y="846" /><use href="#pocoNuboso" x="556" y="916" /><use href="#pocoNuboso" x="1100" y="597" />
                        <use href="#velos" x="610" y="270" /><use href="#velos" x="673" y="348" /><use href="#velos" x="673" y="408" />
                        <use href="#velos" x="811" y="348" /><use href="#velos" x="634" y="495" /><use href="#velos" x="650" y="573" />
                        <use href="#velos" x="658" y="648" /><use href="#velos" x="478" y="744" /><use href="#velos" x="1216" y="571" />
                        <use href="#velos" x="1075" y="436" />
                        <use href="#sol" x="961" y="322" /><use href="#sol" x="898" y="367" /><use href="#sol" x="757" y="400" />
                        <use href="#sol" x="967" y="415" /><use href="#sol" x="916" y="466" /><use href="#sol" x="850" y="607" />
                        <use href="#sol" x="799" y="650" /><use href="#sol" x="784" y="766" /><use href="#sol" x="757" y="835" /><use href="#sol" x="723" y="968" />
                        <use href="#nuboso" x="1053" y="340" /><use href="#nuboso" x="793" y="485" /><use href="#nuboso" x="848" y="531" />
                        <use href="#nuboso" x="1018" y="660" /><use href="#nuboso" x="765" y="704" />
                        <use href="#nubes" x="925" y="568" /><use href="#nubes" x="850" y="741" />
                    </svg>
                    <span class="absolute right-[14px] bottom-[14px] flex items-center gap-1 text-white font-[Inter,sans-serif] font-extrabold text-[20px] leading-6">
                        <svg width="21" height="18"><use href="#aemetMark" /></svg>aemet</span>
                </a>
            </section>
        </div>

        <div class="grid grid-cols-3 gap-x-[17px] mt-[17px] text-[27px] leading-9">
            <h2>Radar</h2>
            <h2>Destacados</h2>
            <h2>Noticias</h2>
        </div>
    </main>

    <!-- Scroll indicator -->
    <div class="fixed right-0 inset-y-0 w-[2px] bg-[#a9bbe0]">
        <div class="h-[422px] bg-[#1a519f]"></div>
    </div>
</body>

</html>
